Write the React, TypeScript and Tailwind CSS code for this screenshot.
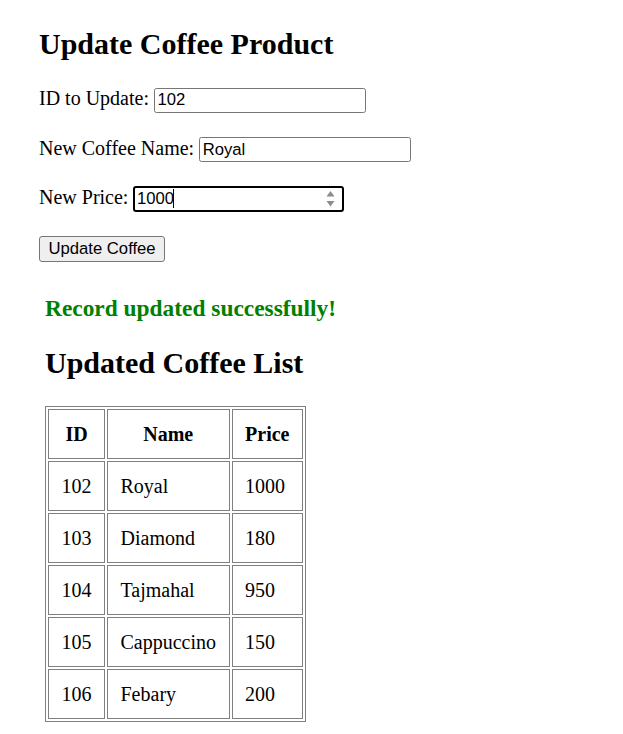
import React from "react";

const coffees = [
  { id: 102, name: "Royal", price: 1000 },
  { id: 103, name: "Diamond", price: 180 },
  { id: 104, name: "Tajmahal", price: 950 },
  { id: 105, name: "Cappuccino", price: 150 },
  { id: 106, name: "Febary", price: 200 },
];

const App = () => {
  return (
    <div className={styles.page}>
      <h2 className={styles.title}>Update Coffee Product</h2>

      {/* update form */}
      <form className="mt-[26px] flex flex-col items-start">
        <div className={styles.row}>
          <label>ID to Update:</label>
          <input type="text" readOnly value="102" className={styles.input} />
        </div>
        <div className={`${styles.row} mt-[24px]`}>
          <label>New Coffee Name:</label>
          <input type="text" readOnly value="Royal" className={styles.input} />
        </div>
        <div className={`${styles.row} mt-[24px]`}>
          <label>New Price:</label>
          <div className="relative">
            <input
              type="text"
              readOnly
              value="1000"
              className="w-[211px] h-[26px] border-2 border-black rounded-[3px] pl-[1.5px] pr-[24px] font-['Liberation_Sans',Arial,sans-serif] text-[16.67px] text-black outline-none"
            />
            {/* caret */}
            <span className="absolute left-[40px] top-[3px] w-px h-[19px] bg-black" />
            {/* spinner */}
            <svg
              className="absolute right-[9px] top-[4px]"
              width="9"
              height="18"
              viewBox="0 0 9 18"
            >
              <path d="M4.5 1 L8.5 6.5 L0.5 6.5 Z" fill="#8c8c8c" />
              <path d="M0.5 11 L8.5 11 L4.5 16.5 Z" fill="#8c8c8c" />
            </svg>
          </div>
        </div>
        <button type="button" className={styles.button}>
          Update Coffee
        </button>
      </form>

      {/* result section */}
      <section className="ml-[6px] mt-[33px]">
        <h3 className="text-[23.4px] leading-[27px] font-bold text-[#008000]">
          Record updated successfully!
        </h3>
        <h2 className="mt-[24px] text-[30px] leading-[34px] font-bold">
          Updated Coffee List
        </h2>
        <table className="mt-[26px] border border-[#808080] border-separate border-spacing-[2px] text-[20px] leading-[23px]">
          <thead>
            <tr>
              <th className={`${styles.cell} font-bold`}>ID</th>
              <th className={`${styles.cell} font-bold`}>Name</th>
              <th className={`${styles.cell} font-bold`}>Price</th>
            </tr>
          </thead>
          <tbody>
            {coffees.map((item) => (
              <tr key={item.id}>
                <td className={`${styles.cell} text-left font-normal`}>{item.id}</td>
                <td className={`${styles.cell} text-left font-normal`}>{item.name}</td>
                <td className={`${styles.cell} text-left font-normal`}>{item.price}</td>
              </tr>
            ))}
          </tbody>
        </table>
      </section>
    </div>
  );
};

export default App;

const styles = {
  page: "min-h-screen bg-white text-black pl-[39px] pb-[12px] font-['Liberation_Serif','Times_New_Roman',serif]",
  title: "pt-[27px] text-[30px] leading-[34px] font-bold",
  row: "flex items-baseline gap-[5px] text-[20px] leading-[23px]",
  input:
    "w-[212px] h-[25px] border border-[#767676] rounded-[2.5px] px-[2.5px] font-['Liberation_Sans',Arial,sans-serif] text-[16.67px] text-black outline-none",
  button:
    "mt-[24px] h-[26px] px-[8.5px] bg-[#efefef] border border-[#767676] rounded-[3px] font-['Liberation_Sans',Arial,sans-serif] text-[16.67px] leading-[20px] text-black",
  cell: "border border-[#808080] px-[12.5px] py-[12.5px]",
};
